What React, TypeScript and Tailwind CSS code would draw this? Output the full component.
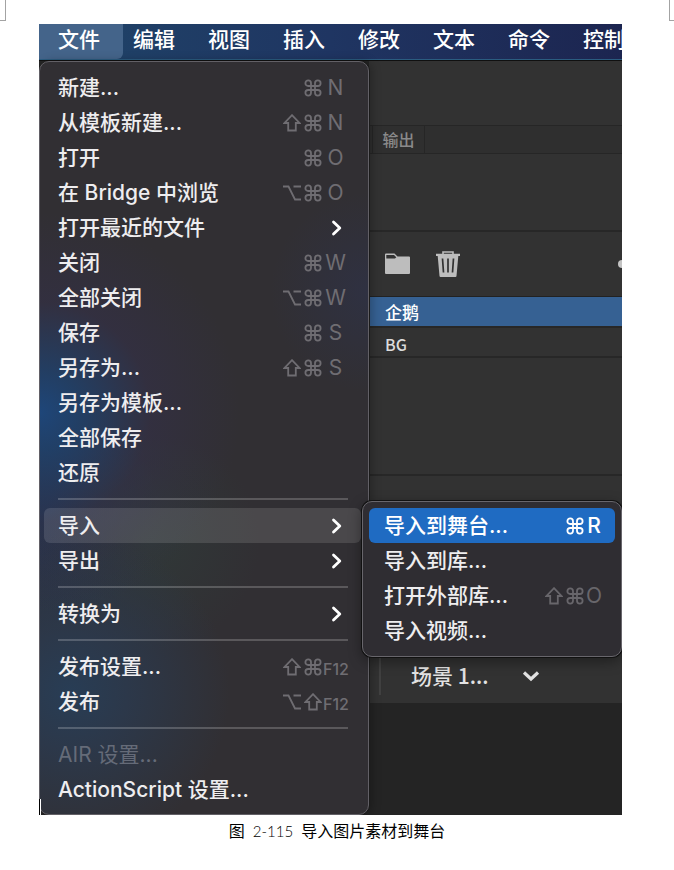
type Item = {
    label: string,
    mods?: string,
    keyName?: string,
    submenu?: Item[],
    active?: boolean,
    disabled?: boolean
}

const menus: string[] = ["编辑", "视图", "插入", "修改", "文本", "命令", "控制"]

const importItems: Item[] = [
    { label: "导入到舞台...", mods: "⌘", keyName: "R", active: true },
    { label: "导入到库..." },
    { label: "打开外部库...", mods: "⇧⌘", keyName: "O" },
    { label: "导入视频..." },
]

const groups: Item[][] = [
    [
        { label: "新建...", mods: "⌘", keyName: "N" },
        { label: "从模板新建...", mods: "⇧⌘", keyName: "N" },
        { label: "打开", mods: "⌘", keyName: "O" },
        { label: "在 Bridge 中浏览", mods: "⌥⌘", keyName: "O" },
        { label: "打开最近的文件", submenu: [] },
        { label: "关闭", mods: "⌘", keyName: "W" },
        { label: "全部关闭", mods: "⌥⌘", keyName: "W" },
        { label: "保存", mods: "⌘", keyName: "S" },
        { label: "另存为...", mods: "⇧⌘", keyName: "S" },
        { label: "另存为模板..." },
        { label: "全部保存" },
        { label: "还原" },
    ],
    [
        { label: "导入", submenu: importItems, active: true },
        { label: "导出", submenu: [] },
    ],
    [
        { label: "转换为", submenu: [] },
    ],
    [
        { label: "发布设置...", mods: "⇧⌘", keyName: "F12" },
        { label: "发布", mods: "⌥⇧", keyName: "F12" },
    ],
    [
        { label: "AIR 设置...", disabled: true },
        { label: "ActionScript 设置..." },
    ],
]

const modPaths: Record<string, string> = {
    "⌘": "M7 7 H4.200 A2.800 2.800 0 1 1 7 4.200 V13.800 A2.800 2.800 0 1 1 4.200 11 H13.800 A2.800 2.800 0 1 1 11 13.800 V4.200 A2.800 2.800 0 1 1 13.800 7 Z",
    "⇧": "M9 1.200 L16.500 9 H12.800 V16.500 H5.200 V9 H1.500 Z",
    "⌥": "M0 2.500 H5.500 L12 15.500 H18 M10.500 2.500 H18",
}

function Modifiers({ mods }: { mods: string }) {
    return <>
        {mods.split("").map((mod) => (
            <span key={mod} className="flex w-[21px] justify-center">
                <svg role="img" aria-label={mod} width="18" height="18" viewBox="0 0 18 18" fill="none" stroke="currentColor" strokeWidth="1.800">
                    <path d={modPaths[mod]} />
                </svg>
            </span>
        ))}
    </>
}

function MenuBar() {
    return <nav className="flex h-9 overflow-hidden border-b border-[#2b5c80] bg-linear-to-r from-[#1f4468] via-[#1f3562] to-[#1c2550] text-[21px] leading-[31px] font-medium text-white">
        <button className="flex w-[84px] shrink-0 rounded-br-md bg-[#44648a] pl-[19px] text-left">文件</button>
        {menus.map((name) => (
            <button key={name} className="flex w-[75px] shrink-0 pl-[10px] text-left">{name}</button>
        ))}
    </nav>
}

function ImportMenu() {
    return <ul className="absolute top-[-7px] left-[318px] z-10 w-[260px] rounded-[10px] border border-[#68666c] bg-[#2f2d32] px-[6px] pt-[6px] pb-2 shadow-[0_0_0_1px_#111,0_4px_14px_rgba(0,0,0,0.4)]">
        {importItems.map((item) => (
            <li key={item.label}>
                <button className={`flex h-[35px] w-full items-center rounded-md pr-3 pl-[15px] ${item.active ? "bg-[#1f6bc2] text-white" : ""}`}>
                    <span className="flex-1 text-left">{item.label}</span>
                    {item.mods && <span className={`flex items-center ${item.active ? "text-white" : "font-normal text-[#68666b]"}`}>
                        <Modifiers mods={item.mods} />
                        <span className="w-[18px] text-center">{item.keyName}</span>
                    </span>}
                </button>
            </li>
        ))}
    </ul>
}

function MenuItem({ item }: { item: Item }) {
    return <li className="relative mr-[7px] ml-1">
        <button disabled={item.disabled} className={`flex h-[35px] w-full items-center rounded-md px-[13px] ${item.active ? "bg-white/12" : ""} ${item.disabled ? "font-normal text-[#656b78]" : ""}`}>
            <span className="flex-1 pl-px text-left">{item.label}</span>
            {item.mods && <span className="flex items-center font-normal text-[#6f6d72]">
                <Modifiers mods={item.mods} />
                <span className={`w-[25px] text-center ${item.keyName === "F12" ? "pt-1 text-[16px] font-medium" : ""}`}>{item.keyName}</span>
            </span>}
            {item.submenu && <span className="flex w-[25px] justify-center">
                <svg width="12" height="16" viewBox="0 0 12 16" fill="none" stroke="white" strokeWidth="2.800" strokeLinecap="round" strokeLinejoin="round">
                    <path d="M3.500 2 L9.800 8 L3.500 14" />
                </svg>
            </span>}
        </button>
        {item.submenu && item.submenu.length > 0 && <ImportMenu />}
    </li>
}

function FileMenu() {
    return <div className="relative z-10 w-[330px] shrink-0 rounded-[10px] border border-[#626066] bg-[#312f33] bg-[radial-gradient(circle_at_0px_350px,#1e4679_0px,#1f426fcc_40px,#34304c80_110px,transparent_200px),radial-gradient(circle_at_30px_630px,#283d55_0px,#2b3a4fcc_60px,transparent_160px),radial-gradient(circle_at_330px_230px,#2f3142_0px,transparent_100px),radial-gradient(circle_at_110px_480px,#303838_0px,transparent_110px),radial-gradient(circle_at_0px_450px,#20364f_0px,transparent_120px)] pt-2 pb-[7px] text-[21px] font-medium text-[#eeedef] shadow-[1px_0_0_#1b1b1b,3px_0_10px_rgba(0,0,0,0.25)]">
        {groups.map((group, i) => (
            <ul key={i}>
                {i > 0 && <li role="separator" className="mr-5 ml-[18px] flex h-[18px] items-center">
                    <hr className="h-[2px] flex-1 border-0 bg-white/20" />
                </li>}
                {group.map((item) => <MenuItem key={item.label} item={item} />)}
            </ul>
        ))}
    </div>
}

function Timeline() {
    return <div className="flex min-w-0 flex-1 flex-col bg-[#323232]">
        <div className="h-[65px] border-b border-[#262626]" />
        <div className="flex h-7 border-b border-[#262626] bg-[#2f2f2f] pl-[3px]">
            <button className="w-[53px] border-x border-[#262626] text-[16px] font-medium text-[#8a8a8a]">输出</button>
        </div>
        <div className="h-[78px] border-b-2 border-[#272727]" />
        <div className="flex h-[65px] items-center gap-6 border-b border-[#222] pl-[15px]">
            <button aria-label="新建文件夹">
                <svg width="27" height="22" viewBox="0 0 27 22">
                    <path d="M1 1.500 Q1 .500 2 .500 H10.500 L13.500 3.500 H25 Q26 3.500 26 4.500 V20 Q26 21 25 21 H2 Q1 21 1 20 Z" fill="#bdbdbd" />
                    <path d="M2.300 2 H10 L12.300 4.200 L11 5.500 H2.300 Z" fill="#323232" />
                </svg>
            </button>
            <button aria-label="删除">
                <svg width="26" height="26" viewBox="-1 0 26 26" fill="none">
                    <path d="M7 3 V1 H17 V3" stroke="#bdbdbd" strokeWidth="1.600" />
                    <path d="M0 2.800 H24 V5 H22.300 L20.500 25 Q20.400 26 19.500 26 H4.500 Q3.600 26 3.500 25 L1.700 5 H0 Z" fill="#bdbdbd" />
                    <path d="M6.500 7.500 L7.500 21.500 M12 7.500 V21.500 M17.500 7.500 L16.500 21.500" stroke="#323232" strokeWidth="1.700" />
                </svg>
            </button>
            <span className="-mr-1 ml-auto size-2 rounded-full bg-[#c4c4c4]" />
        </div>
        <ul className="text-[17px] font-medium">
            <li className="flex h-[31px] items-center border-b-2 border-[#272727] bg-[#366193] pt-1 pl-4 text-white">企鹅</li>
            <li className="flex h-[30px] items-center border-b-2 border-[#272727] pt-1 pl-4 font-['Noto_Sans_CJK_SC'] text-[16px] text-[#dcdcdc]">BG</li>
        </ul>
        <div className="h-[118px] border-b-2 border-[#272727]" />
        <div className="flex h-[227px] items-end pb-2 pl-[10px]">
            <div className="flex h-[38px] items-center border-l-2 border-[#414141] pl-[30px] text-[#e2e2e2]">
                <span className="w-[111px] font-['Noto_Sans_CJK_SC'] text-[21px] font-medium">场景 1...</span>
                <button aria-label="选择场景">
                    <svg width="18" height="12" viewBox="0 0 18 12" fill="none" stroke="#e2e2e2" strokeWidth="3.200">
                        <path d="M2 2.500 L9 9 L16 2.500" />
                    </svg>
                </button>
            </div>
        </div>
        <div className="flex-1 bg-[#242424]" />
    </div>
}

export default function App() {
    return <main className="bg-white font-['Inter','Noto_Sans_CJK_SC',sans-serif]">
        {/* page margin marks */}
        <div className="flex justify-between">
            <span className="h-[21px] w-[6px] border-r border-b border-[#a3a3a3]" />
            <span className="h-[21px] w-[5px] border-b border-l border-[#a3a3a3]" />
        </div>
        <figure className="mt-[3px]">
            <div className="relative mr-[52px] ml-[39px] overflow-hidden">
                <MenuBar />
                <div className="flex border-t border-[#101010] bg-[#242424]">
                    <FileMenu />
                    <Timeline />
                </div>
                <span className="absolute bottom-0 left-0 z-10 h-4 w-[2px] border-l border-black bg-white" />
            </div>
            <figcaption className="pt-[3px] text-center font-['Noto_Sans_CJK_SC',sans-serif] text-[16px] leading-6 text-black">
                图<span className="mx-2 font-['Lato'] text-[15px] font-light">2-115</span>导入图片素材到舞台
            </figcaption>
        </figure>
    </main>
}
